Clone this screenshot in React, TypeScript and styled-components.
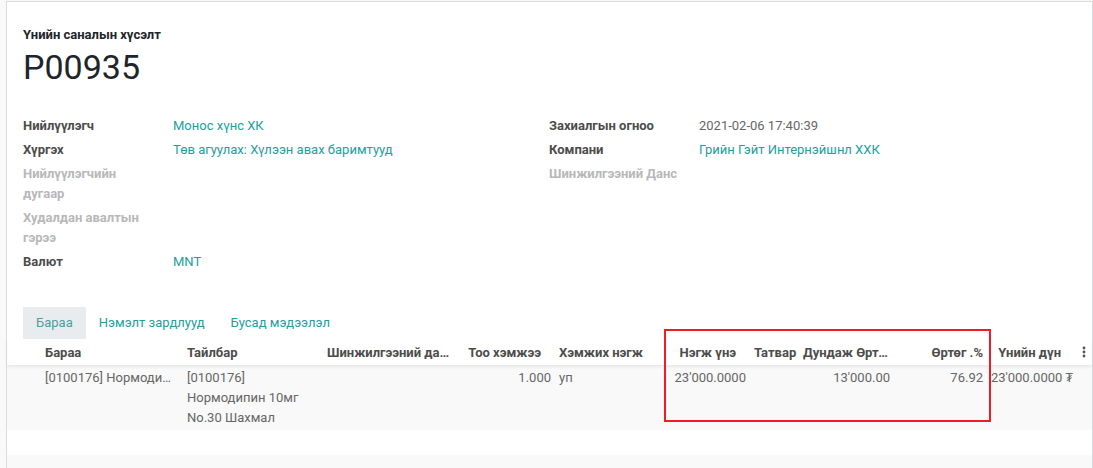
import React from "react";
import styled, { createGlobalStyle } from "styled-components";

const Global = createGlobalStyle`
  html, body { margin: 0; padding: 0; }
  body {
    background: #f9f9f9;
    font-family: Roboto, "Noto Sans", "DejaVu Sans", sans-serif;
    font-size: 13px;
    line-height: 20px;
    color: #4c4c4c;
    overflow: hidden;
  }
`;

const Page = styled.div`
  padding: 1px 0 0 6px;
  height: 467px;
  overflow: hidden;
`;

const Sheet = styled.div`
  background: #fff;
  border: 1px solid #dcdcdc;
  border-right-color: #d6dade;
  min-height: 520px;
`;

const Head = styled.div`
  padding: 23px 16px 0;
`;

const SubTitle = styled.div`
  font-weight: 700;
  font-size: 13px;
  line-height: 20px;
  color: #212529;
`;

const Title = styled.h1`
  margin: 2px 0 0;
  font-weight: 400;
  font-size: 34px;
  line-height: 41px;
  color: #212529;
`;

const Groups = styled.div`
  display: grid;
  grid-template-columns: 526px 526px;
  padding: 0 16px;
  margin-top: 26px;
`;

const Group = styled.div`
  display: flex;
  flex-direction: column;
`;

const FieldRow = styled.div`
  display: grid;
  grid-template-columns: 150px 1fr;
  padding: 2px 0;
`;

const Label = styled.div<{ $empty?: boolean }>`
  font-weight: 700;
  color: ${(p) => (p.$empty ? "#b8b8b8" : "#4c4c4c")};
  padding-right: 16px;
`;

const Value = styled.div<{ $link?: boolean }>`
  color: ${(p) => (p.$link ? "#21a09d" : "#666")};
`;

const Tabs = styled.div`
  display: flex;
  padding: 0 16px;
  margin-top: 33px;
`;

const Tab = styled.div<{ $active?: boolean }>`
  height: 32px;
  line-height: 32px;
  padding: 0 13px;
  font-size: 13px;
  color: ${(p) => (p.$active ? "#4d9e9e" : "#21a09d")};
  background: ${(p) => (p.$active ? "#e9ecef" : "transparent")};
`;

const TableWrap = styled.div`
  position: relative;
`;

const cols = "30px 142px 140px 138px 98px 108px 87px 50px 94px 93px 90px 1fr";

const HeadRow = styled.div`
  display: grid;
  grid-template-columns: ${cols};
  height: 26px;
  box-shadow: 0 2px 3px rgba(0, 0, 0, 0.07);
  position: relative;
  z-index: 1;
  background: #fff;
`;

const Th = styled.div<{ $align?: "left" | "right"; $pl?: number; $pr?: number }>`
  padding: 4px ${(p) => p.$pr ?? 8}px 2px ${(p) => p.$pl ?? 8}px;
  font-weight: 700;
  color: #4c4c4c;
  text-align: ${(p) => p.$align ?? "left"};
  white-space: nowrap;
  overflow: hidden;
  text-overflow: ellipsis;
`;

const BodyRow = styled.div<{ $striped?: boolean; $h?: number }>`
  display: grid;
  grid-template-columns: ${cols};
  background: ${(p) => (p.$striped ? "#f9f9f9" : "#fff")};
  height: ${(p) => p.$h ?? 25}px;
`;

const Td = styled.div<{ $align?: "left" | "right"; $pl?: number; $pr?: number; $wrap?: boolean }>`
  padding: 3px ${(p) => p.$pr ?? 8}px 2px ${(p) => p.$pl ?? 8}px;
  color: #666;
  text-align: ${(p) => p.$align ?? "left"};
  white-space: ${(p) => (p.$wrap ? "normal" : "nowrap")};
  overflow: hidden;
  text-overflow: ellipsis;
`;

const Kebab = styled.div`
  display: flex;
  align-items: center;
  justify-content: flex-start;
  padding-left: 5px;
`;

const RedBox = styled.div`
  position: absolute;
  left: 657px;
  top: -10px;
  width: 327px;
  height: 93px;
  box-sizing: border-box;
  border: 2px solid #ee1c25;
  z-index: 2;
  pointer-events: none;
`;

export default function App() {
  return (
    <>
      <Global />
      <Page>
        <Sheet>
          <Head>
            <SubTitle>Үнийн саналын хүсэлт</SubTitle>
            <Title>P00935</Title>
          </Head>
          <Groups>
            <Group>
              <FieldRow>
                <Label>Нийлүүлэгч</Label>
                <Value $link>Монос хүнс ХК</Value>
              </FieldRow>
              <FieldRow>
                <Label>Хүргэх</Label>
                <Value $link>Төв агуулах: Хүлээн авах баримтууд</Value>
              </FieldRow>
              <FieldRow>
                <Label $empty>Нийлүүлэгчийн дугаар</Label>
                <Value />
              </FieldRow>
              <FieldRow>
                <Label $empty>Худалдан авалтын гэрээ</Label>
                <Value />
              </FieldRow>
              <FieldRow>
                <Label>Валют</Label>
                <Value $link>MNT</Value>
              </FieldRow>
            </Group>
            <Group>
              <FieldRow>
                <Label>Захиалгын огноо</Label>
                <Value>2021-02-06 17:40:39</Value>
              </FieldRow>
              <FieldRow>
                <Label>Компани</Label>
                <Value $link>Грийн Гэйт Интернэйшнл ХХК</Value>
              </FieldRow>
              <FieldRow>
                <Label $empty>Шинжилгээний Данс</Label>
                <Value />
              </FieldRow>
            </Group>
          </Groups>
          <Tabs>
            <Tab $active>Бараа</Tab>
            <Tab>Нэмэлт зардлууд</Tab>
            <Tab>Бусад мэдээлэл</Tab>
          </Tabs>
          <TableWrap>
            <HeadRow>
              <Th />
              <Th>Бараа</Th>
              <Th>Тайлбар</Th>
              <Th $pr={4}>Шинжилгээний данс</Th>
              <Th $align="right" $pr={14}>Тоо хэмжээ</Th>
              <Th $pl={4}>Хэмжих нэгж</Th>
              <Th $align="right" $pr={14}>Нэгж үнэ</Th>
              <Th $pl={4} $pr={0}>Татвар</Th>
              <Th $pl={3} $pr={6}>Дундаж Өртөг</Th>
              <Th $align="right" $pr={4}>Өртөг .%</Th>
              <Th $align="right" $pr={16}>Үнийн дүн</Th>
              <Kebab>
                <svg width="4" height="12" viewBox="0 0 4 12">
                  <circle cx="2" cy="2" r="1.4" fill="#555" />
                  <circle cx="2" cy="6" r="1.4" fill="#555" />
                  <circle cx="2" cy="10" r="1.4" fill="#555" />
                </svg>
              </Kebab>
            </HeadRow>
            <BodyRow $striped $h={65}>
              <Td />
              <Td>[0100176] Нормодипин 10мг No.30 Шахмал</Td>
              <Td $wrap>
                [0100176]
                <br />
                Нормодипин 10мг
                <br />
                No.30 Шахмал
              </Td>
              <Td />
              <Td $align="right" $pr={4}>1.000</Td>
              <Td $pl={4}>уп</Td>
              <Td $align="right" $pl={0} $pr={4}>23'000.0000</Td>
              <Td />
              <Td $align="right" $pr={4}>13'000.00</Td>
              <Td $align="right" $pr={4}>76.92</Td>
              <Td $align="right" $pl={0} $pr={4}>23'000.0000 ₮</Td>
              <Td />
            </BodyRow>
            <BodyRow />
            <BodyRow $striped />
            <RedBox />
          </TableWrap>
        </Sheet>
      </Page>
    </>
  );
}
